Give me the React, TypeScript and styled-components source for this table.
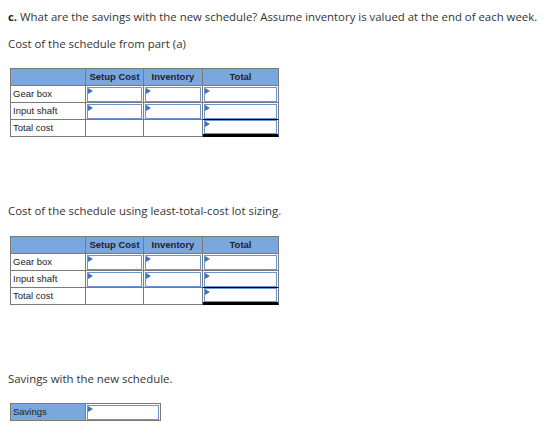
import React from "react";
import styled, { createGlobalStyle } from "styled-components";

const Global = createGlobalStyle`
  html, body { margin: 0; padding: 0; background: #fff; }
  body { font-family: "Open Sans", Lato, sans-serif; color: #333; }
`;

const Page = styled.div`
  padding: 10px 8px 0 8px;
  width: 553px;
  box-sizing: border-box;
`;

const Para = styled.p<{ $top: number }>`
  margin: ${(p) => p.$top}px 0 0 0;
  font-family: "Open Sans", Lato, sans-serif;
  font-size: 11.4px;
  line-height: 14px;
  color: #333;
  white-space: nowrap;
`;

const Bold = styled.b`
  font-weight: 700;
  color: #222;
`;

const Grid = styled.div<{ $top: number; $cols: string }>`
  margin: ${(p) => p.$top}px 0 0 2px;
  display: grid;
  grid-template-columns: ${(p) => p.$cols};
  grid-auto-rows: 17px;
  width: max-content;
  border-left: 1px solid #7a7a7a;
  border-top: 1px solid #7a7a7a;
  font-family: Arial, "Liberation Sans", sans-serif;
  font-size: 9.5px;
  color: #222;
`;

const Cell = styled.div<{ $blue?: boolean; $head?: boolean }>`
  box-sizing: border-box;
  border-right: 1px solid #7a7a7a;
  border-bottom: 1px solid #7a7a7a;
  background: ${(p) => (p.$blue ? "#7ba7df" : "#fff")};
  display: flex;
  align-items: center;
  justify-content: ${(p) => (p.$head ? "center" : "flex-start")};
  font-weight: ${(p) => (p.$head ? 700 : 400)};
  padding: ${(p) => (p.$head ? "0" : "0 0 0 2px")};
  white-space: nowrap;
  line-height: 10px;
`;

const InputCell = styled.div<{ $total?: boolean }>`
  box-sizing: border-box;
  border-right: 1px solid #7a7a7a;
  border-bottom: ${(p) => (p.$total ? "3px solid #000" : "1px solid #7a7a7a")};
  border-top: ${(p) => (p.$total ? "1px solid #000" : "0")};
  margin-top: ${(p) => (p.$total ? "-1px" : "0")};
  padding: ${(p) => (p.$total ? "0 1px 0 1px" : "1px 1px 0 1px")};
  display: flex;
`;

const Field = styled.div`
  position: relative;
  flex: 1;
  border: 1px solid #6b93cd;
  background: #fff;
  box-sizing: border-box;
  &::before {
    content: "";
    position: absolute;
    left: 0;
    top: 0;
    border-top: 3px solid transparent;
    border-bottom: 3px solid transparent;
    border-left: 5px solid #3e73c4;
  }
`;

const COLS = "75px 58px 59px 76px";

function CostTable({ top }: { top: number }) {
  return (
    <Grid $top={top} $cols={COLS}>
      <Cell $blue $head />
      <Cell $blue $head>Setup Cost</Cell>
      <Cell $blue $head>Inventory</Cell>
      <Cell $blue $head>Total</Cell>
      {["Gear box", "Input shaft"].map((r) => (
        <React.Fragment key={r}>
          <Cell>{r}</Cell>
          <InputCell><Field /></InputCell>
          <InputCell><Field /></InputCell>
          <InputCell><Field /></InputCell>
        </React.Fragment>
      ))}
      <Cell>Total cost</Cell>
      <Cell />
      <Cell />
      <InputCell $total><Field /></InputCell>
    </Grid>
  );
}

export default function App() {
  return (
    <>
      <Global />
      <Page>
        <Para $top={0}>
          <Bold>c.</Bold> What are the savings with the new schedule? Assume
          inventory is valued at the end of each week.
        </Para>
        <Para $top={13}>Cost of the schedule from part (a)</Para>
        <CostTable top={17} />
        <Para $top={67}>Cost of the schedule using least-total-cost lot sizing.</Para>
        <CostTable top={18} />
        <Para $top={67}>Savings with the new schedule.</Para>
        <Grid $top={17} $cols="75px 75px">
          <Cell $blue>Savings</Cell>
          <InputCell><Field /></InputCell>
        </Grid>
      </Page>
    </>
  );
}
